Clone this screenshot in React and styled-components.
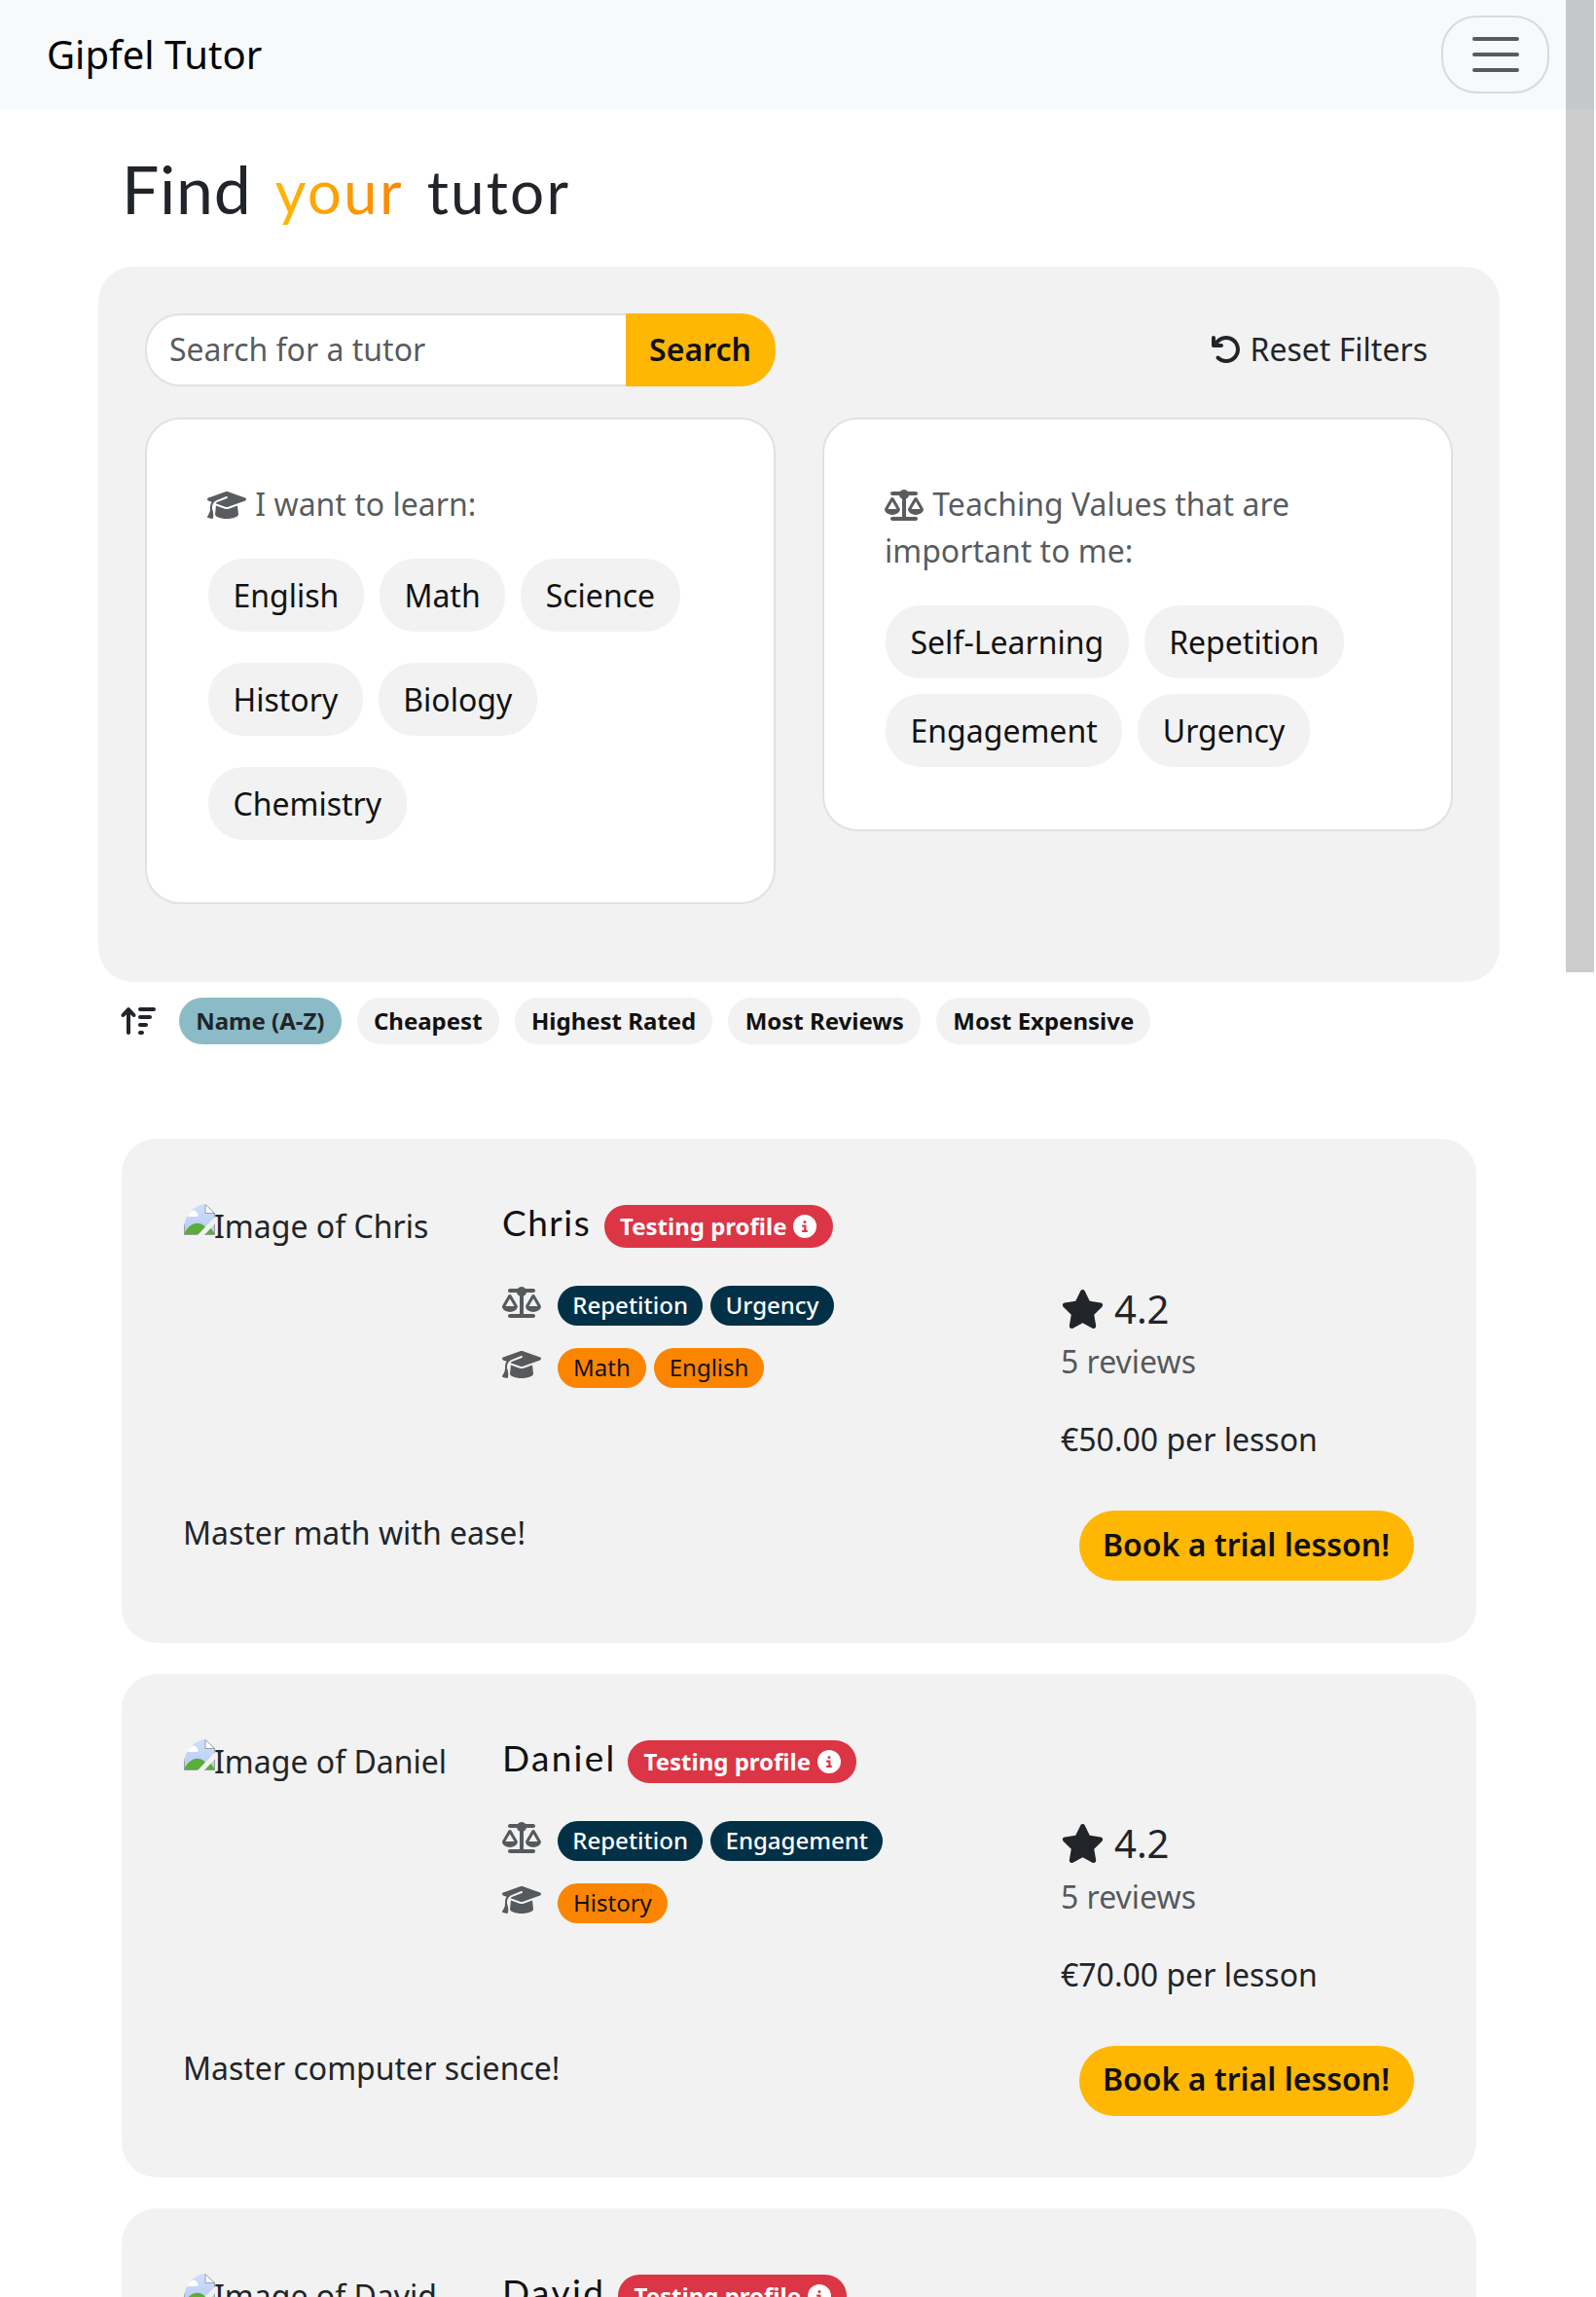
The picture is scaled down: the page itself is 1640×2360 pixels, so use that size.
import React from "react";
import styled, { createGlobalStyle } from "styled-components";
import {
  FaArrowRotateLeft,
  FaArrowUpWideShort,
  FaCircleInfo,
  FaGraduationCap,
  FaScaleBalanced,
  FaStar,
} from "react-icons/fa6";

const GlobalStyle = createGlobalStyle`
  * { box-sizing: border-box; }
  html, body { margin: 0; background: #fff; overflow: hidden; }
  body {
    font-family: "Noto Sans", "Liberation Sans", sans-serif;
    font-size: 32px;
    line-height: 48px;
    color: #212529;
  }
  button, input { font: inherit; }
`;

const Page = styled.div`
  position: relative;
  width: 1640px;
  height: 2360px;
  overflow: hidden;
`;

const Navbar = styled.nav`
  display: flex;
  align-items: center;
  justify-content: space-between;
  height: 112px;
  padding: 0 48px;
  background: #f8f9fb;
`;

const Brand = styled.a`
  font-size: 40px;
  line-height: 60px;
  padding-bottom: 1px;
  color: #000;
`;

const Toggler = styled.button`
  display: flex;
  align-items: center;
  justify-content: center;
  width: 111px;
  height: 80px;
  padding: 0;
  border: 2px solid rgba(33, 37, 41, 0.15);
  border-radius: 36px;
  background: transparent;
`;

const ScrollThumb = styled.div`
  position: absolute;
  top: 0;
  right: 2px;
  width: 29px;
  height: 999px;
  background: rgba(0, 0, 0, 0.2);
`;

const Container = styled.main`
  width: 1440px;
  margin: 0 99px 0 101px;
`;

const Title = styled.h1`
  display: flex;
  align-items: baseline;
  gap: 24px;
  margin: 0;
  height: 162px;
  padding: 40px 24px 0;
  font-family: Lato, sans-serif;
  font-weight: 400;
  font-size: 68px;
  line-height: 84px;
  letter-spacing: 0.7px;
  white-space: nowrap;
`;

const Word = styled.span`
  font-size: 62px;
  letter-spacing: 2.2px;
`;

const Accent = styled(Word)`
  background: linear-gradient(90deg, #ffb703, #fb8500);
  background-clip: text;
  -webkit-background-clip: text;
  color: transparent;
`;

const FilterPanel = styled.section`
  display: grid;
  grid-template-columns: minmax(0, 1fr) minmax(0, 1fr);
  gap: 32px 48px;
  align-items: start;
  padding: 48px 48px 80px;
  border-radius: 36px;
  background: #f2f2f2;
`;

const SearchGroup = styled.div`
  display: flex;
  height: 75px;
`;

const SearchInput = styled.input`
  flex: 1;
  min-width: 0;
  padding: 0 23px 1px;
  border: 2px solid #dee2e6;
  border-right: 0;
  border-radius: 36px 0 0 36px;
  background: #fff;
  &::placeholder { color: rgba(33, 37, 41, 0.75); opacity: 1; }
`;

const SearchButton = styled.button`
  width: 154px;
  padding: 0 1px 1px 0;
  border: 0;
  border-radius: 0 36px 36px 0;
  background: #ffb703;
  color: #111;
  font-weight: 600;
`;

const ResetButton = styled.button`
  display: flex;
  align-items: center;
  justify-self: end;
  gap: 9px;
  height: 75px;
  padding: 0 26px 1px;
  border: 0;
  background: none;
  color: #212529;
`;

const FilterCard = styled.div`
  padding: 63px 62px 64px;
  border: 2px solid #dee2e6;
  border-radius: 36px;
  background: #fff;
`;

const FilterLabel = styled.p`
  margin: 0 0 32px;
  color: rgba(33, 37, 41, 0.75);
  svg { width: 40px; height: 32px; margin-right: 1px; vertical-align: -5px; }
`;

const ChipList = styled.div`
  display: flex;
  flex-wrap: wrap;
  gap: ${(p) => p.$rowGap}px 16px;
  padding-left: 1px;
`;

const Chip = styled.button`
  height: 75px;
  padding: 0 25.5px;
  border: 0;
  border-radius: 36px;
  background: #f2f2f2;
  color: #111;
`;

const SortBar = styled.div`
  display: flex;
  align-items: center;
  gap: 16px;
  height: 48px;
  margin: 16px 24px 97px;
  > svg { margin-left: -1px; margin-right: 8px; }
`;

const SortPill = styled.button`
  height: 48px;
  padding: 0 17.2px;
  border: 0;
  border-radius: 24px;
  background: ${(p) => (p.$active ? "#8bbbc7" : "#f2f2f2")};
  color: ${(p) => (p.$active ? "#212529" : "#111")};
  font-size: 24px;
  line-height: 24px;
  font-weight: 700;
  white-space: nowrap;
`;

const TutorList = styled.div`
  display: flex;
  flex-direction: column;
  gap: 32px;
  padding: 0 24px;
`;

const TutorCard = styled.article`
  display: grid;
  grid-template-columns: 327px 574px 1fr;
  grid-template-rows: 318px 72px;
  height: 517.5px;
  padding: 64px;
  border-radius: 36px;
  background: #f2f2f2;
`;

const Portrait = styled.div`
  display: flex;
  align-items: flex-start;
  padding-top: 3px;
  svg { flex: none; }
`;

const AltText = styled.span`
  margin-top: -1px;
  margin-left: -1px;
  white-space: nowrap;
`;

const NameRow = styled.div`
  display: flex;
  align-items: flex-start;
  height: 84px;
`;

const TutorName = styled.h2`
  margin: 0;
  width: ${(p) => p.$width}px;
  font-family: Lato, sans-serif;
  font-weight: 400;
  font-size: 37px;
  line-height: 44px;
  letter-spacing: ${(p) => p.$tracking}px;
  color: #111;
  white-space: nowrap;
`;

const TestBadge = styled.span`
  display: flex;
  align-items: center;
  gap: 7px;
  height: 44px;
  margin-top: 4px;
  padding: 0 16.5px;
  border-radius: 22px;
  background: #dc3545;
  color: #fff;
  font-size: 24px;
  line-height: 24px;
  font-weight: 700;
  white-space: nowrap;
`;

const TagRow = styled.div`
  display: flex;
  align-items: flex-start;
  gap: 8px;
  height: 64px;
  color: #565a5d;
  > svg { margin-right: 9px; }
`;

const Tag = styled.span`
  height: 41px;
  margin-top: 3px;
  padding: 0 ${(p) => (p.$subject ? 16 : 15.3)}px;
  border-radius: 21px;
  background: ${(p) => (p.$subject ? "#fb8500" : "#023047")};
  color: ${(p) => (p.$subject ? "#111" : "#fff")};
  font-size: 24px;
  line-height: 40px;
  font-weight: ${(p) => (p.$subject ? 400 : 500)};
`;

const Stats = styled.div`
  padding-top: 80px;
`;

const Rating = styled.div`
  display: flex;
  align-items: center;
  gap: 10px;
  height: 61px;
  font-size: 40px;
  line-height: 60px;
  svg { width: 45px; height: 40px; }
`;

const Reviews = styled.div`
  margin-bottom: 32px;
  color: rgba(33, 37, 41, 0.75);
`;

const About = styled.p`
  grid-column: 1 / 3;
  margin: -1px 0 0 -1px;
`;

const BookButton = styled.button`
  justify-self: end;
  width: 344px;
  height: 72px;
  padding: 0 1px 3px 0;
  border: 0;
  border-radius: 36px;
  background: #ffb703;
  color: #111;
  font-weight: 600;
  white-space: nowrap;
`;

const subjects = ["English", "Math", "Science", "History", "Biology", "Chemistry"];
const values = ["Self-Learning", "Repetition", "Engagement", "Urgency"];
const sorts = ["Name (A-Z)", "Cheapest", "Highest Rated", "Most Reviews", "Most Expensive"];

const tutors = [
  { name: "Chris", nameWidth: 104.5, tracking: 1.5, values: ["Repetition", "Urgency"], subjects: ["Math", "English"], price: "€50.00", about: "Master math with ease!" },
  { name: "Daniel", nameWidth: 129, tracking: 2.3, values: ["Repetition", "Engagement"], subjects: ["History"], price: "€70.00", about: "Master computer science!" },
  { name: "David", nameWidth: 119, tracking: 2.4, values: ["Repetition"], subjects: ["Math"], price: "€60.00", about: "Master physics!" },
];

function MissingImage() {
  return (
    <svg width="32" height="32" viewBox="0 0 32 32">
      <defs>
        <linearGradient id="sky" x1="0" y1="0" x2="0" y2="1">
          <stop offset="0" stopColor="#d0dffb" />
          <stop offset="1" stopColor="#b5cbf3" />
        </linearGradient>
        <clipPath id="sheet">
          <path d="M0 32V24C1 12 9 2 21 0L32 9V32Z" />
        </clipPath>
      </defs>
      <g clipPath="url(#sheet)">
        <rect width="32" height="32" fill="url(#sky)" />
        <path d="M4 12a4 4 0 0 1 3-4 4 4 0 0 1 7 2 2 2 0 0 1 0 3H4Z" fill="#fff" />
        <path d="M0 31C6 17 21 15 26 31Z" fill="#59ad38" />
        <path d="M21 31l6-7 5 7Z" fill="#59ad38" />
        <path d="M14 32L32 13V20L21 32Z" fill="#f2f2f2" />
        <path d="M0 31.5H14M21 31.5H32M.5 32V20" stroke="#9a9fa6" fill="none" />
      </g>
      <path d="M22 0.5V9.5H31.5Z" fill="#fff" stroke="#9a9fa6" />
      <path d="M31.5 9V14M31.5 21V32" stroke="#9a9fa6" />
    </svg>
  );
}

function MenuIcon() {
  return (
    <svg width="60" height="60" viewBox="0 0 30 30">
      <path d="M4 7h22M4 15h22M4 23h22" stroke="rgba(33,37,41,.75)" strokeWidth="2" strokeLinecap="round" />
    </svg>
  );
}

function Tutor({ tutor }) {
  return (
    <TutorCard>
      <Portrait>
        <MissingImage />
        <AltText>Image of {tutor.name}</AltText>
      </Portrait>
      <div>
        <NameRow>
          <TutorName $width={tutor.nameWidth} $tracking={tutor.tracking}>{tutor.name}</TutorName>
          <TestBadge>
            Testing profile <FaCircleInfo size={24} />
          </TestBadge>
        </NameRow>
        <TagRow>
          <FaScaleBalanced size={40} />
          {tutor.values.map((v) => <Tag key={v}>{v}</Tag>)}
        </TagRow>
        <TagRow>
          <FaGraduationCap size={40} />
          {tutor.subjects.map((s) => <Tag key={s} $subject>{s}</Tag>)}
        </TagRow>
      </div>
      <Stats>
        <Rating>
          <FaStar />
          4.2
        </Rating>
        <Reviews>5 reviews</Reviews>
        <div>{tutor.price} per lesson</div>
      </Stats>
      <About>{tutor.about}</About>
      <BookButton>Book a trial lesson!</BookButton>
    </TutorCard>
  );
}

export default function App() {
  return (
    <Page>
      <GlobalStyle />
      <Navbar>
        <Brand>Gipfel Tutor</Brand>
        <Toggler aria-label="Menu"><MenuIcon /></Toggler>
      </Navbar>
      <Container>
        <Title>
          <span>Find</span> <Accent>your</Accent> <Word>tutor</Word>
        </Title>
        <FilterPanel>
          <SearchGroup>
            <SearchInput placeholder="Search for a tutor" />
            <SearchButton>Search</SearchButton>
          </SearchGroup>
          <ResetButton><FaArrowRotateLeft size={32} />Reset Filters</ResetButton>
          <FilterCard>
            <FilterLabel><FaGraduationCap /> I want to learn:</FilterLabel>
            <ChipList $rowGap={32}>
              {subjects.map((s) => <Chip key={s}>{s}</Chip>)}
            </ChipList>
          </FilterCard>
          <FilterCard>
            <FilterLabel><FaScaleBalanced /> Teaching Values that are important to me:</FilterLabel>
            <ChipList $rowGap={16}>
              {values.map((v) => <Chip key={v}>{v}</Chip>)}
            </ChipList>
          </FilterCard>
        </FilterPanel>
        <SortBar>
          <FaArrowUpWideShort size={36} />
          {sorts.map((s, i) => <SortPill key={s} $active={i === 0}>{s}</SortPill>)}
        </SortBar>
        <TutorList>
          {tutors.map((t) => <Tutor key={t.name} tutor={t} />)}
        </TutorList>
      </Container>
      <ScrollThumb />
    </Page>
  );
}
